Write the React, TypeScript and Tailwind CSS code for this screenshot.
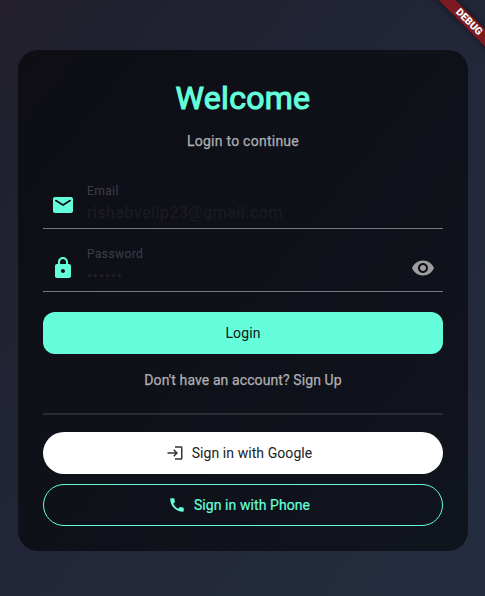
import type { ReactNode } from "react";

function Icon({ d, size, className }: { d: string; size: number; className?: string }) {
  return (
    <svg viewBox="0 0 24 24" width={size} height={size} fill="currentColor" className={className}>
      <path d={d} />
    </svg>
  );
}

const MAIL = "M20 4H4c-1.1 0-2 .9-2 2v12c0 1.1.9 2 2 2h16c1.1 0 2-.9 2-2V6c0-1.1-.9-2-2-2zm-.4 4.25l-7.07 4.42c-.32.2-.74.2-1.06 0L4.4 8.25c-.25-.16-.4-.43-.4-.72 0-.67.73-1.07 1.3-.72L12 11l6.7-4.19c.57-.35 1.3.05 1.3.72 0 .29-.15.56-.4.72z";
const LOCK = "M18 8h-1V6c0-2.76-2.24-5-5-5S7 3.24 7 6v2H6c-1.1 0-2 .9-2 2v10c0 1.1.9 2 2 2h12c1.1 0 2-.9 2-2V10c0-1.1-.9-2-2-2zm-6 9c-1.1 0-2-.9-2-2s.9-2 2-2 2 .9 2 2-.9 2-2 2zM9 8V6c0-1.66 1.34-3 3-3s3 1.34 3 3v2H9z";
const EYE = "M12 4.5C7 4.5 2.73 7.61 1 12c1.73 4.39 6 7.5 11 7.5s9.27-3.11 11-7.5c-1.73-4.39-6-7.5-11-7.5zM12 17c-2.76 0-5-2.24-5-5s2.24-5 5-5 5 2.24 5 5-2.24 5-5 5zm0-8c-1.66 0-3 1.34-3 3s1.34 3 3 3 3-1.34 3-3-1.34-3-3-3z";
const LOGIN = "M11 7L9.6 8.4l2.6 2.6H2v2h10.2l-2.6 2.6L11 17l5-5-5-5zm9 12h-8v2h8c1.1 0 2-.9 2-2V5c0-1.1-.9-2-2-2h-8v2h8v14z";
const PHONE = "M20.01 15.38c-1.23 0-2.42-.2-3.53-.56-.35-.12-.74-.03-1.01.24l-1.57 1.97c-2.83-1.35-5.48-3.9-6.89-6.83l1.95-1.66c.27-.28.35-.67.24-1.02-.37-1.11-.56-2.3-.56-3.53 0-.54-.45-.99-.99-.99H4.19C3.65 3 3 3.24 3 3.99 3 13.28 10.73 21 20.01 21c.71 0 .99-.63.99-1.18v-3.45c0-.54-.45-.99-.99-.99z";

function Field({ icon, label, trailing, children }: { icon: string; label: string; trailing?: ReactNode; children: ReactNode }) {
  return (
    <div className="flex h-[49px] items-center border-b border-[#777980]">
      <div className="flex w-[44px] shrink-0 pt-[2px] pl-2">
        <Icon d={icon} size={24} className="text-[#64ffda]" />
      </div>
      <div className="h-full flex-1 pt-[3px]">
        <div className="h-4 text-[12px] leading-4 tracking-[0.4px] text-[#3d3f45]">{label}</div>
        <div className="mt-[2px] h-6 text-[16px] leading-6 tracking-[0.5px] text-[#1c1d20]">{children}</div>
      </div>
      {trailing}
    </div>
  );
}

export default function App() {
  return (
    <main className="relative h-[596px] w-[485px] overflow-hidden bg-[linear-gradient(to_bottom_right,#231f2b_0%,#20212f_14%,#222638_50%,#242e40_100%)] px-[18px] pt-[50px] font-['Roboto',sans-serif]">
      <section className="flex h-[501px] w-[450px] flex-col rounded-[20px] bg-black/54 px-[25px] pt-[25px]">
        <h1 className="h-[46px] text-center text-[32px] leading-[46px] font-normal tracking-[0.3px] text-[#64ffda] [-webkit-text-stroke:1.1px_#64ffda]">Welcome</h1>
        <p className="mt-[10px] h-5 text-center text-[14px] leading-5 font-normal tracking-[0.25px] text-[#aeafb1] [-webkit-text-stroke:0.25px_#aeafb1]">Login to continue</p>
        <div className="mt-[29px] flex flex-col gap-[14px]">
          <Field icon={MAIL} label="Email">rishabvelip23@gmail.com</Field>
          <Field
            icon={LOCK}
            label="Password"
            trailing={<Icon d={EYE} size={24} className="mt-[2px] mr-2 text-[#9e9e9e]" />}
          >
            <div className="flex h-[22px] items-center gap-[3px] pl-[1px]">
              {[0, 1, 2, 3, 4, 5].map((i) => (
                <span key={i} className="size-[3px] rounded-full bg-[#232426]" />
              ))}
            </div>
          </Field>
        </div>
        <button className="mt-5 h-[42px] shrink-0 rounded-[12px] bg-[#64ffda] text-[14px] leading-5 tracking-[0.1px] text-[#10151b]">Login</button>
        <p className="mt-4 h-5 text-center text-[14px] leading-5 font-normal tracking-[0.1px] text-[#aeafb1] [-webkit-text-stroke:0.25px_#aeafb1]">Don't have an account? Sign Up</p>
        <hr className="mt-[23px] h-[2px] shrink-0 border-0 bg-[#2b2d34]" />
        <button className="mt-[17px] flex h-[42px] shrink-0 items-center justify-center gap-2 rounded-full bg-white pr-2 text-[14px] leading-5 tracking-[0.07px] text-[#202020]">
          <Icon d={LOGIN} size={18} className="text-[#333333]" />
          Sign in with Google
        </button>
        <button className="mt-[10px] flex h-[42px] shrink-0 items-center justify-center gap-2 rounded-full border border-[#64ffda] pr-2 text-[14px] leading-5 font-normal tracking-[0.07px] text-[#64ffda] [-webkit-text-stroke:0.2px_#64ffda]">
          <Icon d={PHONE} size={18} />
          Sign in with Phone
        </button>
      </section>
      <div className="absolute top-[16px] left-[419px] flex h-3 w-[100px] rotate-45 items-center justify-center bg-[#7d1a1f] text-[10.2px] leading-3 font-black text-white shadow-[0_0_6px_rgba(0,0,0,0.5)]">
        DEBUG
      </div>
    </main>
  );
}
